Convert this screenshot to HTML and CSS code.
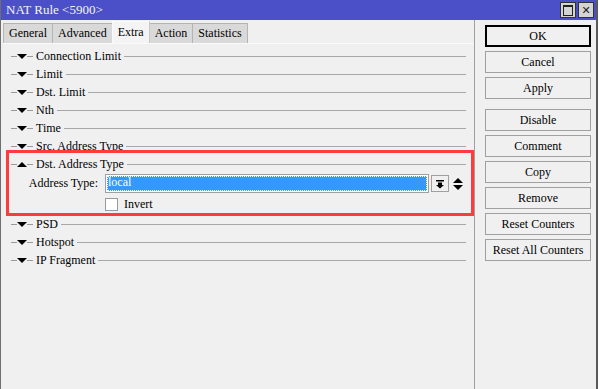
FILE: index.html
```html
<!DOCTYPE html>
<html lang="en">
<head>
  <meta charset="UTF-8" />
  <title>NAT Rule &lt;5900&gt;</title>
  <link rel="stylesheet" href="styles.css">
</head>
<body>

  <div class="window">
    <div class="titlebar">
      <span class="title">NAT Rule &lt;5900&gt;</span>
      <div class="title-buttons">
        <span class="tbtn"><span class="max-box"></span></span>
        <span class="tbtn close">&#x2715;</span>
      </div>
    </div>

    <div class="main">
      <div class="left">
        <div class="tabs">
          <div class="tab">General</div>
          <div class="tab">Advanced</div>
          <div class="tab active">Extra</div>
          <div class="tab">Action</div>
          <div class="tab">Statistics</div>
        </div>

        <div class="panel">
          <div class="section"><span class="dash"></span><span class="tri down"></span><span class="dash"></span><span class="label">Connection Limit</span><span class="line"></span></div>
          <div class="section"><span class="dash"></span><span class="tri down"></span><span class="dash"></span><span class="label">Limit</span><span class="line"></span></div>
          <div class="section"><span class="dash"></span><span class="tri down"></span><span class="dash"></span><span class="label">Dst. Limit</span><span class="line"></span></div>
          <div class="section"><span class="dash"></span><span class="tri down"></span><span class="dash"></span><span class="label">Nth</span><span class="line"></span></div>
          <div class="section"><span class="dash"></span><span class="tri down"></span><span class="dash"></span><span class="label">Time</span><span class="line"></span></div>
          <div class="section"><span class="dash"></span><span class="tri down"></span><span class="dash"></span><span class="label">Src. Address Type</span><span class="line"></span></div>
          <div class="section"><span class="dash"></span><span class="tri up"></span><span class="dash"></span><span class="label">Dst. Address Type</span><span class="line"></span></div>

          <div class="field-row">
            <span class="field-label">Address Type:</span>
            <div class="select">
              <span class="select-value">local</span>
            </div>
            <span class="drop-btn">
              <svg width="10" height="10" viewBox="0 0 10 10"><rect x="1" y="1" width="8" height="1.5" fill="#000"/><path d="M3 3.5h4v2.5h2L5 9.5 1 6h2z" fill="#000"/></svg>
            </span>
            <span class="spin">
              <svg width="10" height="14" viewBox="0 0 10 14"><path d="M5 1 10 6H0z" fill="#000"/><path d="M0 8h10l-5 5z" fill="#000"/></svg>
            </span>
          </div>
          <div class="check-row">
            <span class="checkbox"></span>
            <span>Invert</span>
          </div>

          <div class="section"><span class="dash"></span><span class="tri down"></span><span class="dash"></span><span class="label">PSD</span><span class="line"></span></div>
          <div class="section"><span class="dash"></span><span class="tri down"></span><span class="dash"></span><span class="label">Hotspot</span><span class="line"></span></div>
          <div class="section"><span class="dash"></span><span class="tri down"></span><span class="dash"></span><span class="label">IP Fragment</span><span class="line"></span></div>

          <div class="highlight"></div>
        </div>
      </div>

      <div class="buttons">
        <div class="btn default">OK</div>
        <div class="btn">Cancel</div>
        <div class="btn">Apply</div>
        <div class="btn spaced">Disable</div>
        <div class="btn">Comment</div>
        <div class="btn">Copy</div>
        <div class="btn">Remove</div>
        <div class="btn">Reset Counters</div>
        <div class="btn">Reset All Counters</div>
      </div>
    </div>
  </div>

</body>
</html>
```

FILE: styles.css
```css
body {
  margin: 0;
  background-color: #fff;
  font-family: 'Liberation Serif', 'DejaVu Serif', serif;
  font-size: 12px;
  color: #000;
  overflow: hidden;
}

.window {
  width: 595px;
  height: 400px;
  background-color: #f0f0f0;
  border-left: 1px solid #6e6e6e;
  border-right: 2px solid #5a5a5a;
  display: flex;
  flex-direction: column;
}

.titlebar {
  height: 20px;
  background-color: #4b50c9;
  display: flex;
  align-items: center;
  justify-content: space-between;
  padding-left: 5px;
  padding-right: 2px;
  flex-shrink: 0;
}

.title {
  color: #f4f4f4;
  font-size: 13px;
}

.title-buttons {
  display: flex;
  gap: 2px;
}

.tbtn {
  width: 14px;
  height: 14px;
  background-color: #d4d4d4;
  border: 1px solid #333;
  display: flex;
  align-items: center;
  justify-content: center;
  font-family: 'DejaVu Sans', sans-serif;
  font-size: 11px;
  font-weight: bold;
  color: #222;
}

.max-box {
  width: 8px;
  height: 8px;
  border: 1.5px solid #222;
  border-top-width: 2px;
}

.main {
  flex: 1;
  display: flex;
}

.left {
  width: 471px;
  padding-left: 2px;
  padding-top: 1px;
  display: flex;
  flex-direction: column;
  border-right: 1px solid #a0a0a0;
}

.tabs {
  display: flex;
  align-items: flex-end;
  height: 22px;
}

.tab {
  height: 19px;
  padding: 0 5px;
  background-color: #d9d9d9;
  border: 1px solid #b4b4b4;
  border-bottom: none;
  margin-right: -1px;
  line-height: 19px;
  font-size: 12px;
}

.tab.active {
  height: 21px;
  line-height: 20px;
  background-color: #f4f4f4;
  border-color: #fafafa #c8c8c8 transparent #fafafa;
  position: relative;
  z-index: 1;
}

.panel {
  flex: 1;
  position: relative;
  border-top: 1px solid #fafafa;
  padding: 3px 8px 0 8px;
}

.section {
  height: 18px;
  display: flex;
  align-items: center;
}

.dash {
  width: 6px;
  height: 1px;
  background-color: #9a9a9a;
}

.tri {
  width: 0;
  height: 0;
  border-left: 5px solid transparent;
  border-right: 5px solid transparent;
}

.tri.down {
  border-top: 5px solid #000;
}

.tri.up {
  border-bottom: 5px solid #000;
}

.label {
  padding: 0 3px 0 3px;
  white-space: nowrap;
}

.line {
  flex: 1;
  height: 1px;
  background-color: #a8a8a8;
}

.field-row {
  height: 19px;
  display: flex;
  align-items: center;
  margin-top: 1px;
}

.field-label {
  width: 87px;
  text-align: right;
  padding-right: 7px;
}

.select {
  width: 320px;
  height: 15px;
  border: 1px solid #a0a0a0;
  background-color: #fff;
  padding: 1px;
  display: flex;
}

.select-value {
  flex: 1;
  background-color: #3399ff;
  color: #fff;
  line-height: 13px;
  padding-left: 1px;
  outline: 1px dotted #fff;
  outline-offset: -1px;
}

.drop-btn {
  width: 16px;
  height: 15px;
  margin-left: 2px;
  border: 1px solid #a0a0a0;
  display: flex;
  align-items: center;
  justify-content: center;
}

.spin {
  margin-left: 4px;
  display: flex;
  align-items: center;
}

.check-row {
  height: 22px;
  display: flex;
  align-items: center;
  padding-left: 94px;
  gap: 6px;
}

.checkbox {
  width: 11px;
  height: 11px;
  border: 1px solid #9a9a9a;
  background-color: #fff;
}

.highlight {
  position: absolute;
  left: 3px;
  top: 106px;
  width: 462px;
  height: 60px;
  border: 3px solid #ff3b3b;
}

.buttons {
  width: 106px;
  padding: 5px 0 0 10px;
  display: flex;
  flex-direction: column;
  gap: 4px;
}

.btn {
  height: 20px;
  border: 1px solid #a0a0a0;
  background-color: #f0f0f0;
  text-align: center;
  line-height: 20px;
  white-space: nowrap;
}

.btn.default {
  border: 2px solid #000;
  height: 18px;
  line-height: 18px;
}

.btn.spaced {
  margin-top: 6px;
}
```
